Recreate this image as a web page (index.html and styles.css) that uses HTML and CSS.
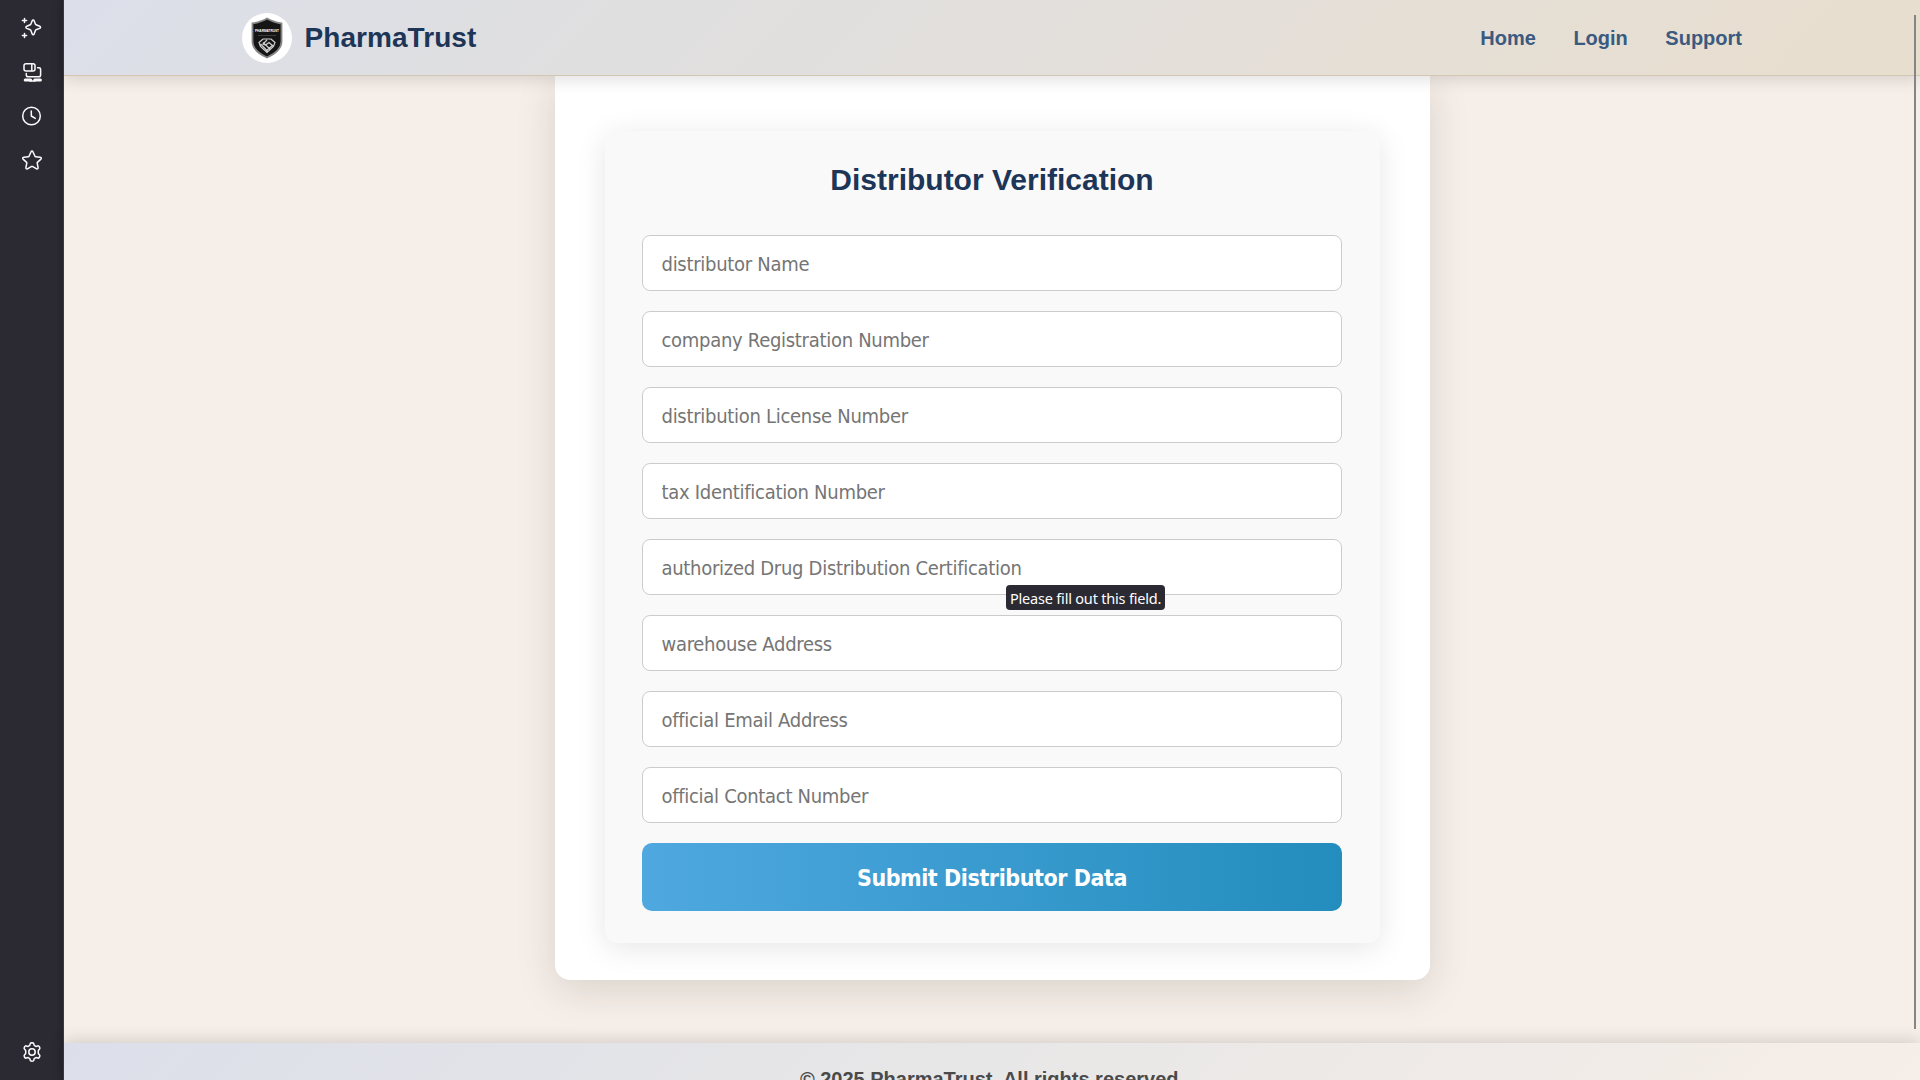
FILE: index.html
```html
<!DOCTYPE html>
<html lang="en">
<head>
<meta charset="utf-8">
<title>PharmaTrust</title>
<link rel="stylesheet" href="styles.css">
</head>
<body>
<div class="window">
  <aside class="sidebar">
    <svg class="tool" viewBox="0 0 20 20"><path d="M11.200 2.100c.4 0 .7.2.9.6l1.400 3.600 .5.5 3.700 1.500c1.100.5 1.100 1.700 0 2.100L14 11.800l-.5.5-1.400 3.700c-.4 1.100-1.500 1.100-1.900 0l-1.400-3.700-.5-.5-3.600-1.400c-1.100-.5-1.100-1.700 0-2.100l3.600-1.500.5-.5 1.400-3.600c.2-.4.600-.6 1-.6z"/><path d="M2.500.4v4.200M.4 2.500h4.200M2.500 15.400v4.200M.4 17.500h4.200"/></svg>
    <svg class="tool" viewBox="0 0 20 20"><rect x="2" y="1.700" width="11" height="7.400" rx="2"/><path d="M9.800 2.500v6"/><path d="M15.600 5.700h1.200c1.200 0 1.800.6 1.800 1.700v5.500c0 1.100-.6 1.800-1.800 1.800H6.100c-1.100 0-1.800-.7-1.800-1.800v-1.400"/><path class="thick" d="M3.200 18h5.500M12.700 18h5.700"/><path d="M8 19h5"/></svg>
    <svg class="tool" viewBox="0 0 20 20"><circle cx="9.500" cy="10" r="8.800"/><path d="M9.300 5v5l4 2.400"/></svg>
    <svg class="tool" viewBox="0 0 20 20"><path d="M9.100 1.700c.4-.8 1.400-.8 1.800 0l2.100 4.600c.1.300.3.400.6.400l4.700.6c1 .1 1.300 1.100.6 1.800l-3.500 3.300c-.2.200-.3.500-.2.800l.9 4.500c.2.900-.7 1.500-1.500 1.100l-4.200-2.400h-.8l-4.200 2.400c-.8.400-1.700-.2-1.500-1.100l.9-4.500c.1-.3 0-.6-.2-.8L1.100 9.100c-.7-.7-.4-1.700.6-1.800l4.700-.6c.3 0 .5-.1.600-.4z"/></svg>
    <svg class="tool settings" viewBox="0 0 20 20"><path d="M8.200 1.700c.3-1.200 3.300-1.200 3.600 0l.4 1.700 1.700 1 1.900-.5c1.200-.3 2.700 2.200 1.800 3.100L16.300 8.500v3l1.300 1.500c.9.900-.6 3.400-1.800 3.100l-1.900-.5-1.700 1-.4 1.700c-.3 1.200-3.300 1.200-3.600 0l-.4-1.700-1.700-1-1.900.5c-1.200.3-2.700-2.200-1.800-3.100l1.300-1.500v-3L2.400 7c-.9-.9.600-3.400 1.800-3.100l1.900.5 1.700-1z"/><circle cx="10" cy="10" r="3.200"/></svg>
  </aside>
  <div class="page">
    <header class="header">
      <div class="header-inner">
        <a class="brand">
          <svg class="logo" viewBox="0 0 50 50"><circle cx="25" cy="25" r="25" fill="#fff"/><path d="M25 5.500c4 2.500 9 4 14.500 5v18c0 7.500-7 12.500-14.500 16-7.500-3.500-14.500-8.500-14.500-16v-18c5.500-1 10.500-2.500 14.500-5z" fill="#151515" stroke="#858585" stroke-width="1.800"/><text x="25" y="18.500" textLength="24" lengthAdjust="spacingAndGlyphs" class="logo-text">PHARMATRUST</text><path d="M16 22.500h18" stroke="#3c3c3c"/><path d="M17 29.500l4-3.500h8l4 3.500-1.500 4-6.500 6-6.500-6zM18.500 31l7 7M21 29.500l7 6.500M31 32l-7 6M25 27l-4 4 2.500 1 3.500-2.500 4.500 4" fill="none" stroke="#d0d0d0" stroke-width="1.200"/></svg>
          <span class="brand-name">PharmaTrust</span>
        </a>
        <nav class="nav"><a>Home</a><a>Login</a><a>Support</a></nav>
      </div>
    </header>
    <main class="main">
      <section class="card">
        <form class="form">
          <h2 class="title">Distributor Verification</h2>
          <input class="field" placeholder="distributor Name">
          <input class="field" placeholder="company Registration Number">
          <input class="field" placeholder="distribution License Number">
          <input class="field" placeholder="tax Identification Number">
          <div class="field-wrap">
            <input class="field" placeholder="authorized Drug Distribution Certification">
            <span class="tooltip">Please fill out this field.</span>
          </div>
          <input class="field" placeholder="warehouse Address">
          <input class="field" placeholder="official Email Address">
          <input class="field" placeholder="official Contact Number">
          <button class="submit" type="button">Submit Distributor Data</button>
        </form>
      </section>
    </main>
    <footer class="footer">© 2025 PharmaTrust. All rights reserved.</footer>
    <div class="scrollbar"></div>
  </div>
</div>
</body>
</html>
```
FILE: styles.css
```css
* { box-sizing: border-box; }
body { margin: 0; font-family: "Liberation Sans", Arial, sans-serif; }
.window { display: flex; width: 100vw; height: 100vh; overflow: hidden; }

.sidebar {
  width: 64px; flex: none; padding: 18px 0;
  display: flex; flex-direction: column; align-items: center; gap: 24px;
  background: linear-gradient(90deg, #2b2a33 56px, #25242c 63px, #3b3a40 63px);
}
.tool { width: 20px; height: 20px; fill: none; stroke: #fbfbfe; stroke-width: 1.5; stroke-linecap: round; stroke-linejoin: round; overflow: visible; }
.tool .thick { stroke-width: 3; }
.settings { margin-top: auto; }

.page { position: relative; flex: 1; min-width: 0; display: flex; flex-direction: column; background: #f6eee8; }
.header {
  position: relative; z-index: 2; flex: none; height: 76px;
  background: linear-gradient(135deg, #dcdfea 0%, #dfdfe1 25%, #e3dfdb 55%, #e6dfd5 75%, #e8dece 100%);
  border-bottom: 1px solid #d3c6b3;
  box-shadow: 0 4px 15px rgba(0, 0, 0, .12);
}
.header-inner { width: 1500px; height: 100%; margin: 0 auto; display: flex; align-items: center; justify-content: space-between; }
.brand { display: flex; align-items: center; gap: 12.5px; }
.logo { width: 50px; height: 50px; }
.logo-text { font: bold 4px "Liberation Sans", sans-serif; fill: #fff; text-anchor: middle; }
.brand-name { font-size: 28px; font-weight: bold; letter-spacing: .06px; color: #1d3557; }
.nav { display: flex; gap: 37.5px; padding-top: 1px; font-size: 20px; font-weight: bold; color: #3b5a80; }

.main { flex: 1; min-height: 0; display: flex; justify-content: center; align-items: flex-start; }
.card {
  width: 875px; height: 904px; padding: 55px 50px 37px;
  background: #fff; border-radius: 0 0 15px 15px;
  box-shadow: 0 10px 40px rgba(30, 30, 10, .13);
}
.form {
  height: 812px; padding: 30px 37.5px 32px; border-radius: 12px; background: #f9f9f9;
  box-shadow: 0 5px 30px rgba(0, 0, 0, .1);
  display: flex; flex-direction: column; gap: 20px;
}
.title { margin: 0 0 17px; font-size: 30px; line-height: 37px; text-align: center; color: #1d3557; }
.field-wrap { position: relative; display: flex; }
.field {
  width: 100%; height: 56px; flex: none; padding: 1px 18.5px 0;
  border: 1px solid #ccc; border-radius: 8px; background: #fff;
  font-family: "DejaVu Sans Condensed", "DejaVu Sans", sans-serif; font-stretch: condensed; font-size: 20px; letter-spacing: -.29px;
}
.field::placeholder { color: #757575; opacity: 1; }
.tooltip {
  position: absolute; left: 364px; top: 46px; height: 25px; padding: 0 4px;
  border-radius: 4px; background: #2b2a33; color: #fff; white-space: nowrap;
  font: 14.5px/26px "Noto Sans", sans-serif; letter-spacing: -.2px;
}
.submit {
  height: 68px; flex: none; border: 0; border-radius: 10px; padding: 2px 0 0; color: #fff;
  background: linear-gradient(90deg, #4fa8e0, #238dbd);
  font: bold 23px "DejaVu Sans Condensed", "DejaVu Sans", sans-serif; font-stretch: condensed; letter-spacing: -.43px;
}
.footer {
  position: relative; flex: none; height: 37px; padding-top: 25px; text-align: center;
  background: linear-gradient(135deg, #dcdfea, #e8e7e7 50%, #f6eee8);
  box-shadow: 0 -4px 15px rgba(0, 0, 0, .12);
  font-size: 20px; line-height: 23px; font-weight: bold; color: #4a4a4a;
}
.scrollbar { position: absolute; z-index: 3; right: 4px; top: 15px; width: 2px; height: 1014px; background: #858585; }
```
